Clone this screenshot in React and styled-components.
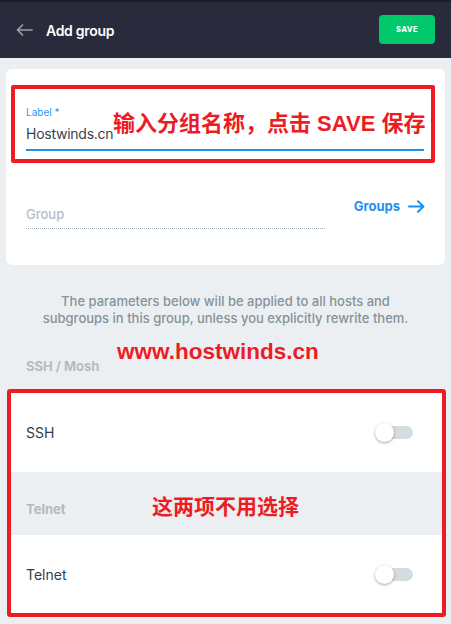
import React from "react";
import styled, { createGlobalStyle } from "styled-components";

const red = "#ed1c24";
const blue = "#1f8ff0";

const Global = createGlobalStyle`
  html, body {
    margin: 0;
    padding: 0;
    background: #eceff1;
    font-family: Inter, "Noto Sans", sans-serif;
  }
  * { box-sizing: border-box; }
`;

const Page = styled.div`
  width: 451px;
  min-height: 624px;
  background: #eceff1;
  overflow: hidden;
`;

const Header = styled.header`
  height: 58px;
  border-top: 2px solid #1b1c29;
  background: #292b3d;
  display: flex;
  align-items: center;
  padding: 0 16px;
`;

const Title = styled.h1`
  margin: 0 0 0 13px;
  flex: 1;
  color: #ffffff;
  font-size: 14px;
  font-weight: 600;
  letter-spacing: -0.3px;
`;

const SaveButton = styled.button`
  width: 56px;
  height: 29px;
  border: none;
  border-radius: 4px;
  background: #00c96c;
  color: #fff;
  font-family: Inter, sans-serif;
  font-size: 7.5px;
  font-weight: 800;
  letter-spacing: 0.4px;
  margin-top: -1px;
`;

const Card = styled.section`
  margin: 11px 6px 0;
  background: #fff;
  border-radius: 6px;
  padding: 16px 10px 36px 5px;
`;

const Annotated = styled.div`
  position: relative;
  border: 4px solid ${red};
  border-radius: 2px;
  padding: 17px 7px 8px 11px;
`;

const Note = styled.span`
  position: absolute;
  top: ${(p) => p.$top}px;
  left: ${(p) => p.$left}px;
  color: ${red};
  font-family: "Liberation Sans", "Noto Sans CJK SC", sans-serif;
  font-weight: 700;
  font-size: ${(p) => p.$size || 22}px;
  line-height: 26px;
  white-space: nowrap;
`;

const FieldLabel = styled.div`
  color: #2e9af0;
  font-size: 10px;
  line-height: 12px;
`;

const FieldValue = styled.div`
  margin-top: 6px;
  padding-bottom: 5px;
  border-bottom: 2px solid ${blue};
  color: #3b4150;
  font-size: 14px;
  letter-spacing: -0.25px;
  line-height: 20px;
`;

const GroupRow = styled.div`
  display: flex;
  align-items: flex-start;
  margin: 34px 10px 0 15px;
`;

const GroupInput = styled.div`
  width: 299px;
  padding: 8px 0 5px;
  border-bottom: 1px dotted #9fb0bb;
  color: #b5bec5;
  font-size: 13px;
  font-weight: 500;
  line-height: 18px;
`;

const GroupsLink = styled.a`
  margin-left: auto;
  display: flex;
  align-items: center;
  gap: 8px;
  color: ${blue};
  font-size: 13px;
  font-weight: 700;
  line-height: 18px;
`;

const Info = styled.p`
  margin: 28px 0 0;
  padding: 0 30px;
  text-align: center;
  color: #86929a;
  font-size: 13px;
  font-weight: 500;
  line-height: 17px;
`;

const SectionHead = styled.div`
  position: relative;
  margin: 31px 0 15px;
  padding-left: 26px;
  color: #b3bcc3;
  font-size: 13px;
  font-weight: 700;
  line-height: 16px;
`;

const SettingsBox = styled.div`
  margin: 0 5px 0 7px;
  border: 4px solid ${red};
  border-radius: 3px;
  background: #fff;
`;

const Row = styled.div`
  height: ${(p) => p.$h}px;
  display: flex;
  align-items: center;
  justify-content: space-between;
  padding: 0 29px 0 15px;
  color: #2c3e50;
  font-size: 14px;
`;

const GroupBand = styled.div`
  position: relative;
  height: 63px;
  background: #eceff1;
  display: flex;
  align-items: flex-end;
  padding: 0 15px 18px;
  color: #b0bac1;
  font-size: 13px;
  font-weight: 700;
  line-height: 16px;
`;

const Track = styled.div`
  position: relative;
  width: 33px;
  height: 13px;
  border-radius: 7px;
  background: #d5dce0;
`;

const Knob = styled.div`
  position: absolute;
  left: -5px;
  top: -3px;
  width: 19px;
  height: 19px;
  border-radius: 50%;
  background: #fff;
  box-shadow: 0 1px 3px rgba(0, 0, 0, 0.35);
`;

const Toggle = () => (
  <Track>
    <Knob />
  </Track>
);

const BackArrow = () => (
  <svg width="17" height="12" viewBox="0 0 17 12" fill="none" stroke="#9aa0ad" strokeWidth="1.7" strokeLinecap="round" strokeLinejoin="round">
    <path d="M16 6H1.5M6.5 1L1.5 6l5 5" />
  </svg>
);

const ForwardArrow = () => (
  <svg width="17" height="13" viewBox="0 0 17 13" fill="none" stroke={blue} strokeWidth="2" strokeLinecap="round" strokeLinejoin="round">
    <path d="M1 6.5h14.5M10 1.3l5.5 5.2-5.5 5.2" />
  </svg>
);

export default function App() {
  return (
    <Page>
      <Global />
      <Header>
        <BackArrow />
        <Title>Add group</Title>
        <SaveButton>SAVE</SaveButton>
      </Header>

      <Card>
        <Annotated>
          <FieldLabel>Label *</FieldLabel>
          <FieldValue>Hostwinds.cn</FieldValue>
          <Note $top={22} $left={98}>输入分组名称，点击 SAVE 保存</Note>
        </Annotated>
        <GroupRow>
          <GroupInput>Group</GroupInput>
          <GroupsLink>
            Groups
            <ForwardArrow />
          </GroupsLink>
        </GroupRow>
      </Card>

      <Info>
        The parameters below will be applied to all hosts and subgroups in this group, unless you explicitly rewrite them.
      </Info>

      <SectionHead>
        SSH / Mosh
        <Note $top={-19} $left={117} $size={22.5}>www.hostwinds.cn</Note>
      </SectionHead>

      <SettingsBox>
        <Row $h={79}>
          SSH
          <Toggle />
        </Row>
        <GroupBand>
          Telnet
          <Note $top={22} $left={141} $size={21}>这两项不用选择</Note>
        </GroupBand>
        <Row $h={78}>
          Telnet
          <Toggle />
        </Row>
      </SettingsBox>
    </Page>
  );
}
